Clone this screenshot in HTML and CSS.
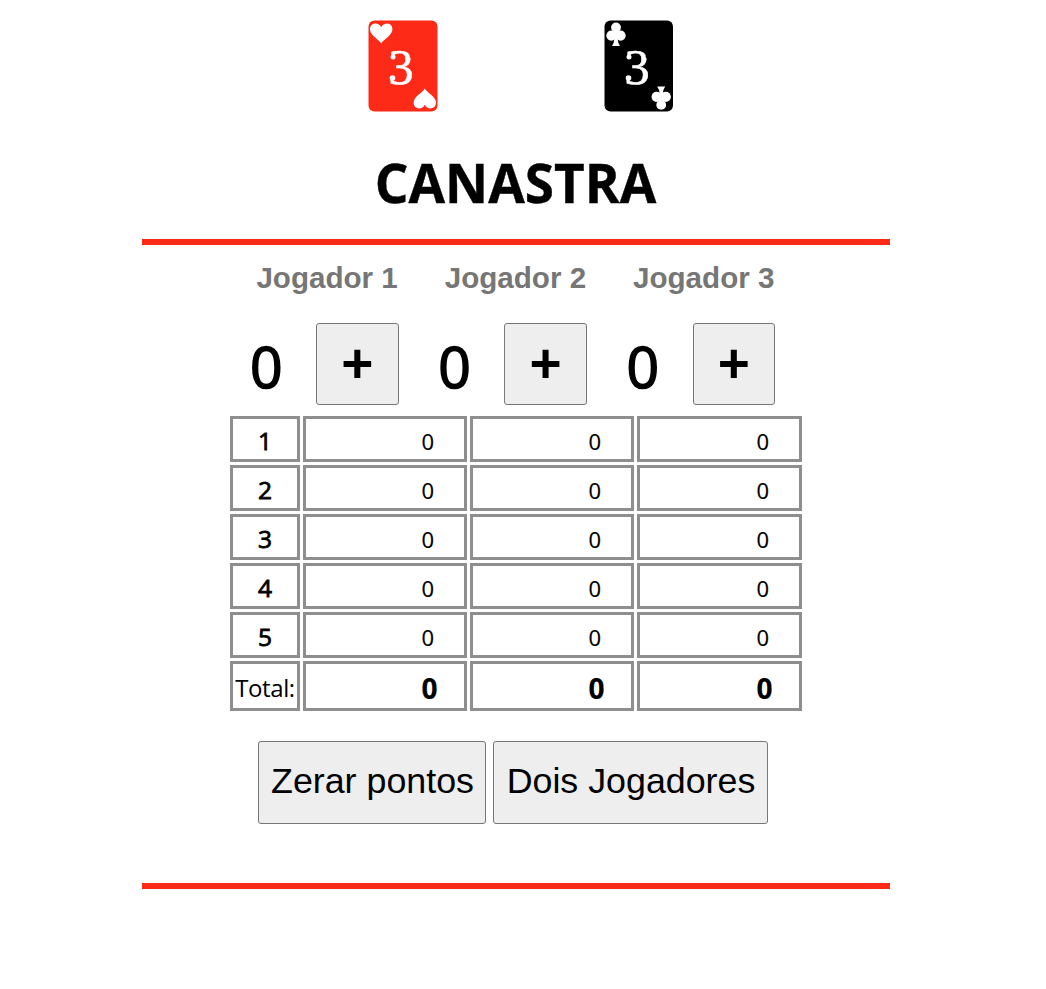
FILE: index.html
```html
<!DOCTYPE html>
<html lang="pt-BR">
<head>
<meta charset="utf-8">
<title>Canastra</title>
<link rel="stylesheet" href="styles.css">
</head>
<body>
<header class="cards">
  <svg class="card" viewBox="0 0 70 92">
    <rect x=".5" y=".5" width="69" height="91" rx="6" fill="#fc2a17"/>
    <g fill="#fff">
      <path id="heart" d="M13.2 23.5C11.2 19.6 2 15.2 2 9.4C2 2.4 10.6 1.7 13.2 7.3C15.8 1.7 24.4 2.4 24.4 9.4C24.4 15.2 15.2 19.6 13.2 23.5Z"/>
      <use href="#heart" transform="rotate(180 35 46)"/>
      <text class="rank" x="33" y="64">3</text>
      <circle cx="25" cy="37" r="2.5"/><circle cx="24.5" cy="58" r="2.8"/>
    </g>
  </svg>
  <svg class="card" viewBox="0 0 70 92">
    <rect x=".5" y=".5" width="68.5" height="91" rx="6" fill="#000"/>
    <g fill="#fff">
      <g id="club">
        <circle cx="12" cy="7.5" r="4.9"/><circle cx="7.4" cy="15.6" r="5.1"/><circle cx="16.6" cy="15.6" r="5.1"/>
        <path d="M10.5 9H13.5L13.6 19Q14.1 23.5 16 26H8Q9.9 23.5 10.4 19Z"/>
      </g>
      <use href="#club" transform="rotate(180 34.6 46.2)"/>
      <text class="rank" x="33" y="64">3</text>
      <circle cx="25" cy="37" r="2.5"/><circle cx="24.5" cy="58" r="2.8"/>
    </g>
  </svg>
</header>
<main class="game">
  <h1 class="title">CANASTRA</h1>
  <section class="board">
    <div class="players">
      <div class="player"><div class="name">Jogador 1</div><div class="score"><span class="points">0</span><button class="add">+</button></div></div>
      <div class="player"><div class="name">Jogador 2</div><div class="score"><span class="points">0</span><button class="add">+</button></div></div>
      <div class="player"><div class="name">Jogador 3</div><div class="score"><span class="points">0</span><button class="add">+</button></div></div>
    </div>
    <div class="table">
      <div class="round">1</div><div class="cell">0</div><div class="cell">0</div><div class="cell">0</div>
      <div class="round">2</div><div class="cell">0</div><div class="cell">0</div><div class="cell">0</div>
      <div class="round">3</div><div class="cell">0</div><div class="cell">0</div><div class="cell">0</div>
      <div class="round">4</div><div class="cell">0</div><div class="cell">0</div><div class="cell">0</div>
      <div class="round">5</div><div class="cell">0</div><div class="cell">0</div><div class="cell">0</div>
      <div class="round label">Total:</div><div class="cell total">0</div><div class="cell total">0</div><div class="cell total">0</div>
    </div>
    <div class="actions">
      <button class="action reset">Zerar pontos</button>
      <button class="action mode">Dois Jogadores</button>
    </div>
  </section>
</main>
</body>
</html>
```
FILE: styles.css
```css
* { box-sizing: border-box; }
body { margin: 0; background: #fff; color: #000; font-family: "Open Sans", sans-serif; }
.cards { display: flex; gap: 166px; padding: 20px 0 0 368px; }
.card { width: 70px; height: 92px; display: block; }
.rank { font: 51px "Liberation Serif", serif; text-anchor: middle; stroke: #fff; stroke-width: .5px; }
.game { width: 748px; margin-left: 142px; }
.title { margin: 0; height: 127px; padding-top: 35px; font-size: 53px; line-height: 72px; font-weight: 700; text-align: center; text-indent: -1px; -webkit-text-stroke: .4px #000; }
.board { height: 650px; border-top: 6px solid #fc2a17; border-bottom: 6px solid #fc2a17; }
.players { display: grid; grid-template-columns: repeat(3, 188.3px); padding-left: 91px; height: 171px; }
.name { height: 78px; padding: 15px 0 0 23.4px; font: bold 29.6px/36px "Liberation Sans", Arial, sans-serif; color: #767676; white-space: nowrap; }
.score { display: flex; }
.points { width: 83px; padding-left: 17px; font-size: 57px; line-height: 87px; font-weight: 400; -webkit-text-stroke: 1.6px #000; }
button { border: 1px solid #767676; border-radius: 3px; background: #eee; color: #000; padding: 0; font-family: "Liberation Sans", Arial, sans-serif; white-space: nowrap; }
.add { width: 82.5px; height: 82px; font-size: 55px; line-height: 70px; font-weight: 700; padding-bottom: 3px; }
.table { display: grid; grid-template-columns: 70px 164px 164px 165px; grid-template-rows: repeat(5, 46px) 50px; gap: 3px; margin-left: 88px; }
.round, .cell { border: 3px solid #8f8e8e; }
.round { font-size: 24.5px; line-height: 43px; font-weight: 400; text-align: center; -webkit-text-stroke: .8px #000; }
.cell { font-size: 22px; line-height: 45px; text-align: right; padding-right: 30px; -webkit-text-stroke: .2px #000; }
.round.label { font-size: 24px; line-height: 48px; letter-spacing: -.4px; -webkit-text-stroke: 0; }
.cell.total { font-size: 28px; line-height: 48px; font-weight: 700; padding-right: 26.5px; }
.actions { display: flex; gap: 7px; padding: 30px 0 0 116px; }
.action { height: 83px; font-size: 35.8px; padding: 0 0 2px 1px; }
.reset { width: 228px; }
.mode { width: 275px; }
```
